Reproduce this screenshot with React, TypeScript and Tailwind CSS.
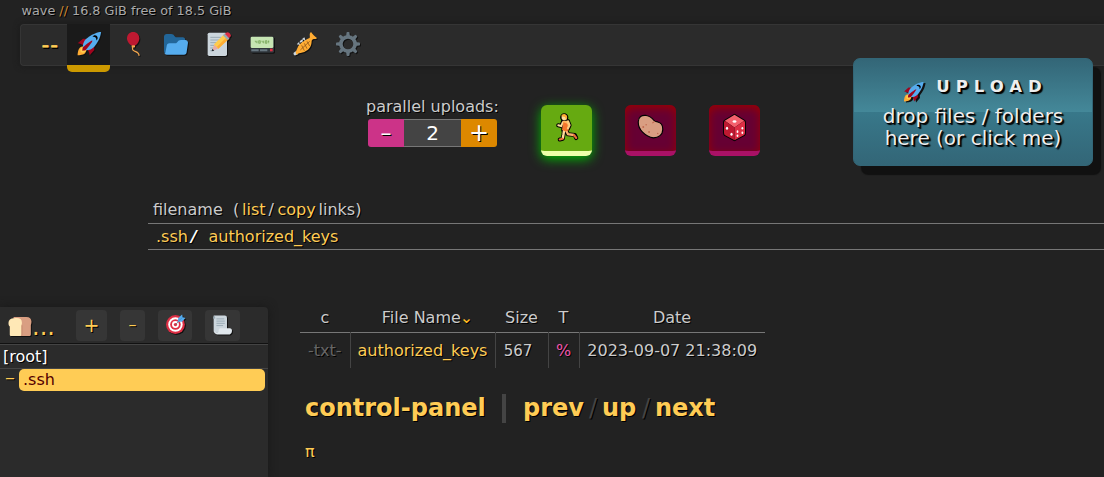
import React from "react";

type IconProps = { className?: string };

const Rocket = ({ className = "" }: IconProps) => (
  <svg viewBox="0 0 36 36" className={className}>
    <path fill="#A0041E" d="M1 17l8-7 16 1 1 16-7 8s.001-5.999-6-12-12-6-12-6z" />
    <path fill="#FFAC33" d="M.973 35s-.036-7.979 2.985-11S15 21.187 15 21.187 14.999 29 11.999 32c-3 3-11.026 3-11.026 3z" />
    <circle fill="#FFCC4D" cx="8.999" cy="27" r="4" />
    <path fill="#55ACEE" d="M35.999 0s-10 0-22 10c-6 5-6 14-4 16s11 2 16-4c10-12 10-22 10-22z" />
    <path d="M26.999 5c-1.623 0-3.013.971-3.641 2.360.502-.227 1.055-.36 1.641-.36 2.209 0 4 1.791 4 4 0 .586-.133 1.139-.359 1.640 1.389-.627 2.359-2.017 2.359-3.640 0-2.209-1.791-4-4-4z" />
    <path fill="#A0041E" d="M8 28s0-4 1-5 13.001-10.999 14-10-9.001 13-10.001 14S8 28 8 28z" />
  </svg>
);

const Balloon = ({ className = "" }: IconProps) => (
  <svg viewBox="0 0 36 36" className={className}>
    <path fill="none" stroke="#F4A850" strokeWidth="2" strokeLinecap="round" d="M18 22c-2 4 0 6 3 7s6 2 6 6" />
    <path fill="#BE1931" d="M27.500 9.500C27.500 15 23 21 18.500 21S9 15 9 9.500 13 0 18.250 0s9.250 4 9.250 9.500z" />
    <path fill="#F4A850" d="M16 20h5v3h-5z" />
  </svg>
);

const Folder = ({ className = "" }: IconProps) => (
  <svg viewBox="0 0 36 36" className={className}>
    <path fill="#269" d="M0 29c0 2.209 1.791 4 4 4h24c2.209 0 4-1.791 4-4V12c0-2.209-1.791-4-4-4h-9c-3.562 0-3-5-8.438-5H4C1.791 3 0 4.791 0 7v22z" />
    <path fill="#55ACEE" d="M32 12h-6.500C20 12 20.500 17 17 17H8c-2.209 0-4 1.791-4 4l-2 10c-.2 1-1 1.500-1.500 1.200C1.300 33 2.500 34 4 34h26c2.209 0 4-1.791 4-4l2-14c0-2.209-1.791-4-4-4z" />
  </svg>
);

const Memo = ({ className = "" }: IconProps) => (
  <svg viewBox="0 0 36 36" className={className}>
    <rect x="1" y="1" width="29" height="35" rx="2.500" fill="#CCD6DD" />
    <path stroke="#99AAB5" strokeWidth="1.500" d="M5 8h17M5 12h15M5 16h11M5 20h9M5 24h5M5 28h5" />
    <path fill="#FFCC4D" d="M9 25l2-7L26 3l7 7-16 15z" />
    <path fill="#FFAC33" d="M15 22L30 7l3 3-16 15z" />
    <path fill="#99AAB5" d="M24 5l3-3 7 7-3 3z" />
    <path fill="#DD2E44" d="M27 3c2-3 4-4 7-1s2 5-1 7z" />
    <path fill="#E6AAAA" d="M8 28l3-9 6 6z" />
    <path fill="#292F33" d="M7 29l1-4 3 3z" />
  </svg>
);

const Pager = ({ className = "" }: IconProps) => (
  <svg viewBox="0 0 36 36" className={className}>
    <path fill="#31373D" d="M1 9q0-2 2-2h31q2 0 2 2v20q0 2-2 2H3q-2 0-2-2z" />
    <rect x="1" y="7" width="34" height="17" rx="2" fill="#C6E5B3" />
    <path stroke="#5C913B" strokeWidth=".8" fill="none" d="M9 13v2h2.500m0-2v4M14 13h2.500v4H14zm0 2h2.500M19 13v2h2.500m0-2v4M24 17v-4h2.500v4H24m0-2h2.500M29 13v2m0-2v4" transform="translate(-1 0)" />
    <path fill="#66757F" d="M2 26h11v3H2zm13 0h11v3H15z" />
    <path fill="#DD2E44" d="M30 25h4v4h-4z" />
  </svg>
);

const Trumpet = ({ className = "" }: IconProps) => (
  <svg viewBox="0 0 36 36" className={className}>
    <path fill="#CCD6DD" d="M1 31l3-2 4 4-4 2c-2 1-4-2-3-4z" />
    <path stroke="#CCD6DD" strokeWidth="1.800" d="M8 17l5 6M12 13l5 6M16 10l5 6" />
    <path fill="#CCD6DD" d="M6 18l3-3 1 2-3 2zM10 14l4-3 1 2-4 3zM14 10l3-2 1 2-3 2z" />
    <path fill="#FFAC33" d="M4 30l4-9c4-5 12-10 17-12 1-3-1-6 1-8l1-1c2 3 6 7 9 9l-1 1c-3 1-5-1-7 3 0 6-2 12-8 15-4 3-8 3-11 4l-4 2z" />
    <path stroke="#8f5518" strokeWidth="1.200" fill="none" d="M13 20l4 8M17 17l4 8M21 14l4 7M11 27L25 14" />
  </svg>
);

const teeth = [0, 45, 90, 135, 180, 225, 270, 315];

const Gear = ({ className = "" }: IconProps) => (
  <svg viewBox="0 0 36 36" className={className}>
    <circle cx="18" cy="18" r="10.700" fill="none" stroke="#66757F" strokeWidth="5.500" />
    {teeth.map((angle) => (
      <path
        key={angle}
        transform={`rotate(${angle} 18 18)`}
        fill="#66757F"
        d="M15 7l.8-6q.2-1 1.200-1h2q1 0 1.200 1l.8 6z"
      />
    ))}
  </svg>
);

const Runner = ({ className = "" }: IconProps) => (
  <svg viewBox="0 0 36 36" className={className}>
    <g stroke="#000" strokeLinejoin="round" strokeLinecap="round" fill="none">
      <path d="M15 20l-1 7-1 6-4 1M17 21l3 6 9 1 2 4M13 11l-2 5-4-1M20 10l2 5-2 4" strokeWidth="5.500" />
      <path d="M13 9h7l1 10-3 4-5-1z" strokeWidth="4" />
      <circle cx="15" cy="4.500" r="4" strokeWidth="3" />
    </g>
    <path d="M15 20l-1 7-1 6" stroke="#FFDC9A" strokeWidth="3.200" fill="none" />
    <path d="M17 21l3 6 8 1" stroke="#F7B26E" strokeWidth="3.200" fill="none" />
    <path d="M13 33l-4 1M28 28l3 4" stroke="#E8703A" strokeWidth="2.800" strokeLinecap="round" />
    <path d="M13 11l-2 5-4-1" stroke="#FFDC9A" strokeWidth="2.600" fill="none" strokeLinecap="round" />
    <path fill="#FFB45E" d="M13 9h7l1 9-8 1z" />
    <path fill="#F4752D" d="M14 11l5 2 2 9-5 1-4-2 1-5z" />
    <path d="M20 10l2 5-2 4" stroke="#FFCC80" strokeWidth="3" fill="none" strokeLinecap="round" />
    <circle cx="15" cy="4.700" r="3.600" fill="#FFDC9A" />
    <path fill="#FFAC33" d="M11 3c1-4 7-4 8 1l-1 4-2-4z" />
  </svg>
);

const Potato = ({ className = "" }: IconProps) => (
  <svg viewBox="0 0 36 36" className={className}>
    <path
      fill="#D99E82"
      stroke="#000"
      strokeWidth="1.600"
      d="M1 11C1 4 6 1 12 2c5 1 8 3 10 6 1 2 3 3 6 3 5 1 7 5 7 10 0 8-6 12-13 12-7-1-10-3-15-8C3 21 1 16 1 11z"
    />
    <g fill="#C1694F">
      <circle cx="8" cy="18" r="1.300" />
      <circle cx="12" cy="15" r="1" />
      <circle cx="16" cy="25" r="1.300" />
      <circle cx="28" cy="27" r="1" />
      <path d="M20 12l3-2 2 0-4 3z" />
    </g>
  </svg>
);

const Die = ({ className = "" }: IconProps) => (
  <svg viewBox="0 0 36 36" className={className}>
    <path d="M18 1l13 8q1 1 1 2v14q0 2-1 3L18 35 5 28q-1-1-1-3V11q0-1 1-2z" stroke="#000" strokeWidth="2.500" />
    <path fill="#F4606C" d="M18 1l13 8-13 9L5 9z" />
    <path fill="#BE1931" d="M5 9l13 9v17L5 28q-1-1-1-3V11z" />
    <path fill="#DD2E44" d="M31 9l-13 9v17l13-7q1-1 1-3V11z" />
    <g fill="#fff">
      <ellipse cx="18" cy="10" rx="2.600" ry="1.800" />
      <ellipse cx="8" cy="19" rx="1.500" ry="2" />
      <ellipse cx="14" cy="27" rx="1.500" ry="2" />
      <ellipse cx="22" cy="29" rx="1.200" ry="1.700" />
      <ellipse cx="22" cy="23.500" rx="1.200" ry="1.700" />
      <ellipse cx="28.500" cy="19" rx="1.200" ry="1.700" />
      <ellipse cx="28.500" cy="25" rx="1.200" ry="1.700" />
    </g>
  </svg>
);

const Bread = ({ className = "" }: IconProps) => (
  <svg viewBox="0 0 36 36" className={className}>
    <path fill="#D99E82" d="M8 3h20c5 0 8 3 8 7 0 3-1 5-1 6v14c0 2-1 3-3 3H6z" />
    <path fill="#C98F72" d="M18 32h4V16h-4z" />
    <path fill="#FFE8B6" d="M9 5c8-1 12 1 12 7 0 3-1 4-1 5v14c0 1-1 2-2 2H4c-1 0-2-1-2-2V18c-2-2-2-4-2-6 0-4 3-7 9-7z" />
  </svg>
);

const Target = ({ className = "" }: IconProps) => (
  <svg viewBox="0 0 36 36" className={className}>
    <circle cx="17" cy="19" r="17" fill="#DD2E44" />
    <circle cx="17" cy="19" r="13" fill="#fff" />
    <circle cx="17" cy="19" r="9.500" fill="#DD2E44" />
    <circle cx="17" cy="19" r="6.200" fill="#fff" />
    <circle cx="17" cy="19" r="3" fill="#DD2E44" />
    <path stroke="#66757F" strokeWidth="1.500" d="M17 19L30 7" />
    <path fill="#55ACEE" d="M21 14l1-7 7-6 1 5 5 1-6 7z" />
    <path stroke="#3B88C3" strokeWidth="1.200" d="M21 14l9-8" />
  </svg>
);

const Scroll = ({ className = "" }: IconProps) => (
  <svg viewBox="0 0 36 36" className={className}>
    <path fill="#CCD6DD" d="M3 1h20q4 0 4 4v27H8q-5 0-5-4z" />
    <path stroke="#99AAB5" strokeWidth="1.700" d="M8 7h14M8 11h15M8 15h15M8 19h12" />
    <path fill="#99AAB5" d="M2 5q0-3 3-3l1 4-3 1z" />
    <path fill="#E1E8ED" d="M14 24h18q4 0 4 5t-4 6H9q-4 0-6-6 6 4 9 1-1-4 2-6z" />
  </svg>
);

const tabs = [
  { name: "balloon", Icon: Balloon },
  { name: "folder", Icon: Folder },
  { name: "memo", Icon: Memo },
  { name: "pager", Icon: Pager },
  { name: "trumpet", Icon: Trumpet },
  { name: "gear", Icon: Gear },
];

const iconShadow = "h-6 w-6 overflow-visible drop-shadow-[1px_1px_0px_#111]";

function Toolbar() {
  return (
    <nav className="ml-5 flex h-[42px] rounded-l border border-r-0 border-[#353535] bg-[#2b2b2b] shadow-[0_0_6px_#1a1a1a]">
      <div className="flex w-[46px] items-center justify-end pr-[8px] text-[23px] leading-none text-[#fc5]">
        <span className="pb-px tracking-[0.6px] [text-shadow:0_1px_0_#a83,1px_2px_0_#000]">--</span>
      </div>
      <div className="-mt-px flex h-[48px] w-[43px] flex-col overflow-hidden rounded-b-[5px]">
        <div className="flex h-[41px] items-center justify-center bg-[#1a1a1a] pb-px pl-px">
          <Rocket className={iconShadow} />
        </div>
        <div className="h-[7px] bg-[#c90]" />
      </div>
      {tabs.map(({ name, Icon }) => (
        <div key={name} className="flex w-[43px] items-center justify-center pb-[2px] pl-[3px]">
          <Icon className={iconShadow} />
        </div>
      ))}
    </nav>
  );
}

function UploadPanel() {
  return (
    <div className="absolute top-[58px] left-[853px] flex h-[108px] w-[240px] flex-col items-center rounded-[7px] border border-[#367] bg-[linear-gradient(to_bottom,#367_0%,#489_50%,#38788a_50%,#367_100%)] pt-[15px] text-[#eee] shadow-[8px_9px_1px_#111] [text-shadow:1px_1px_1px_#000,2px_2px_1px_#000]">
      <div className="flex h-[31px] items-center gap-[12px] pl-[5px]">
        <Rocket className="mt-[5px] h-[20px] w-[21px] overflow-visible drop-shadow-[2px_1px_0px_#111]" />
        <span className="-mt-1 text-[16.500px] font-bold tracking-[6px]">UPLOAD</span>
      </div>
      <div className="text-center text-[20px] leading-[22px]">
        drop files / folders
        <br />
        here (or click me)
      </div>
    </div>
  );
}

function UploadOptions() {
  return (
    <section className="flex h-[97px] pt-[29px] pl-[366px]">
      <div className="w-[175px]">
        <div className="h-[24px] text-[16px] leading-[23px]">parallel uploads:</div>
        <div className="ml-[2px] flex h-7 w-[129px] overflow-hidden rounded-[3px] text-white">
          <div className="flex w-9 items-center justify-center bg-[#c38] text-[22px] leading-none [text-shadow:1px_1px_0_#000]">–</div>
          <div className="flex w-[57px] items-center justify-center border-y border-[#777] bg-[#444] text-[20px] leading-none [text-shadow:none]">2</div>
          <div className="flex w-9 items-center justify-center bg-[#d80] text-[24px] leading-none [text-shadow:1px_1px_0_#000]">+</div>
        </div>
      </div>
      <div className="flex gap-[33px] pt-[10px]">
        <div className="flex h-[51px] w-[51px] items-start justify-center rounded-[6px] border-b-[5px] border-[#efa] bg-[#6a1] pt-[9px] shadow-[0_3px_12px_#0b0]">
          <Runner className="h-[27px] w-[27px] overflow-visible" />
        </div>
        <div className="flex h-[51px] w-[51px] items-start justify-center rounded-[6px] border-b-[5px] border-[#a16] bg-[#603] pt-[9px] shadow-[inset_0_3px_10px_#900]">
          <Potato className="h-[26px] w-[27px] overflow-visible" />
        </div>
        <div className="flex h-[51px] w-[51px] items-start justify-center rounded-[6px] border-b-[5px] border-[#a16] bg-[#603] pt-[9px] shadow-[inset_0_3px_10px_#900]">
          <Die className="h-[27px] w-[27px] overflow-visible" />
        </div>
      </div>
    </section>
  );
}

function UploadedFiles() {
  return (
    <section className="mt-[34px] ml-[148px] text-[16px]">
      <div className="flex h-[27px] items-center border-b border-[#777] pl-[5px]">
        <span className="w-[80px]">filename</span>
        <span className="w-[9px]">(</span>
        <span className="w-[26.500px] text-[#fc5]">list</span>
        <span className="w-[9px]">/</span>
        <span className="w-[41px] text-[#fc5]">copy</span>
        <span>links)</span>
      </div>
      <div className="flex h-[26px] items-center border-b border-[#777] pl-[8px] text-[#fc5]">
        <span className="w-[35px]">.ssh</span>
        <span className="w-[17.500px] text-[16px] leading-none font-bold text-white italic">/</span>
        <span>authorized_keys</span>
      </div>
    </section>
  );
}

function Sidebar() {
  return (
    <aside className="flex w-[268px] flex-col rounded-tr-[4px] bg-[#2b2b2b] shadow-[0_0_10px_#181818]">
      <div className="flex h-[37px] items-center border-b border-[#111] pl-2 text-[#fc5]">
        <div className="flex w-[68px] items-center">
          <Bread className="mt-[3px] h-[23px] w-6 overflow-visible drop-shadow-[1px_1px_0px_#111]" />
          <span className="pt-[3px] text-[24px] leading-none">...</span>
        </div>
        <div className="flex h-[31px] w-[31px] items-center justify-center rounded bg-[#363636] text-[19px]">+</div>
        <div className="ml-[13px] flex h-[31px] w-[25px] items-center justify-center rounded bg-[#363636] pb-px text-[16px]">–</div>
        <div className="ml-[13px] flex h-[31px] w-[34px] items-center justify-center rounded bg-[#363636] pb-[2px] pl-px">
          <Target className="h-5 w-5 drop-shadow-[1px_1px_0px_#111]" />
        </div>
        <div className="ml-[13px] flex h-[31px] w-[35px] items-center justify-center rounded bg-[#363636] pr-px pb-px">
          <Scroll className="h-5 w-5 drop-shadow-[1px_1px_0px_#111]" />
        </div>
      </div>
      <div className="flex h-[25px] items-center border-y border-[#444] pl-[3px] text-[16px] leading-none text-white">[root]</div>
      <div className="flex h-[22px]">
        <span className="w-[19px] pl-[5px] text-[20px] leading-[17px] text-[#fc5]">–</span>
        <span className="w-[246px] rounded-[5px] bg-[#fc5] pl-[4px] text-[16px] leading-[21px] text-[#500] [text-shadow:none]">.ssh</span>
      </div>
    </aside>
  );
}

function Listing() {
  return (
    <main className="pl-8">
      <table className="table-fixed border-collapse text-[16px]">
        <colgroup>
          <col className="w-[50px]" />
          <col className="w-[145px]" />
          <col className="w-[53px]" />
          <col className="w-[31px]" />
          <col className="w-[186px]" />
        </colgroup>
        <thead>
          <tr className="h-[25px] border-b border-[#777] leading-none">
            <th className="p-0 pb-[2px] font-normal">c</th>
            <th className="p-0 pb-[2px] pl-[10px] font-normal">
              File Name<span className="-ml-px text-[#fb2]">⌄</span>
            </th>
            <th className="p-0 pb-[2px] font-normal">Size</th>
            <th className="p-0 pb-[2px] font-normal">T</th>
            <th className="p-0 pb-[2px] font-normal">Date</th>
          </tr>
        </thead>
        <tbody>
          <tr className="h-[36px] text-center leading-none">
            <td className="p-0 pt-[2px] text-[#666]">-txt-</td>
            <td className="border-l border-[#444] p-0 pt-[2px] text-[#fc5]">authorized_keys</td>
            <td className="border-l border-[#444] p-0 pt-[2px] pr-[7px] text-[15px]">567</td>
            <td className="border-l border-[#444] p-0 pt-[2px] text-[#e5a]">%</td>
            <td className="border-l border-[#444] p-0 pt-[2px]">2023-09-07 21:38:09</td>
          </tr>
        </tbody>
      </table>
      <div className="mt-[25px] ml-[5px] flex h-[30px] items-center text-[24px] leading-none font-bold text-[#fc5]">
        <span className="w-[197px]">control-panel</span>
        <span className="h-[29px] w-1 bg-[#444]" />
        <span className="w-[66px] pl-[17px]">prev</span>
        <span className="ml-[17px] w-[13px] font-normal text-[#444]">/</span>
        <span className="w-[40px]">up</span>
        <span className="w-[13px] font-normal text-[#444]">/</span>
        <span>next</span>
      </div>
      <div className="mt-[17px] ml-[5px] text-[16px] text-[#fc5]">π</div>
    </main>
  );
}

export default function App() {
  return (
    <div className="relative h-[477px] w-[1104px] overflow-hidden bg-[#222] font-['DejaVu_Sans',sans-serif] text-[#ccc] [text-shadow:1px_1px_0_#000]">
      <header className="h-6 pt-[2px] pl-[21.500px] text-[12.800px] leading-[18px] text-[#aaa]">
        wave <span className="text-[#c83]">//</span> 16.8 GiB free of 18.5 GiB
      </header>
      <Toolbar />
      <UploadOptions />
      <UploadedFiles />
      <div className="mt-[57px] flex h-[170px]">
        <Sidebar />
        <Listing />
      </div>
      <UploadPanel />
    </div>
  );
}
